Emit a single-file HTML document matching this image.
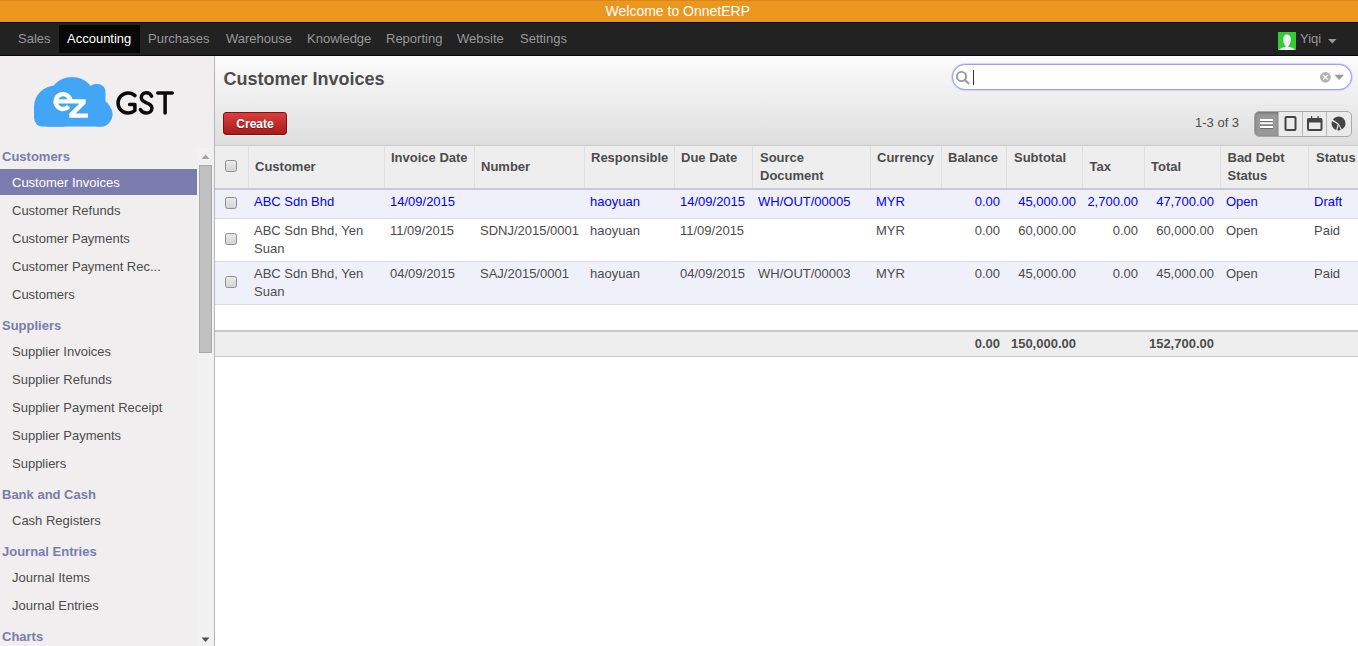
<!DOCTYPE html>
<html><head><meta charset="utf-8"><title>Customer Invoices</title>
<style>
html,body{margin:0;padding:0;width:1358px;height:646px;overflow:hidden;background:#fff;font-family:"Liberation Sans", sans-serif;}
.t{position:absolute;white-space:nowrap;line-height:18px;}
.b{position:absolute;}
</style></head><body>
<div class="b" style="left:0px;top:0px;width:1358px;height:22px;background:#ea961f;"></div>
<div class="b" style="left:0px;top:0px;width:1358px;height:1px;background:#d8871a;"></div>
<div class="t" style="left:377.79999999999995px;width:600px;text-align:center;top:1.60px;font-size:14px;color:#ffffff;">Welcome to OnnetERP</div>
<div class="b" style="left:0px;top:22px;width:1358px;height:34px;background:#222222;"></div>
<div class="b" style="left:0px;top:22px;width:1358px;height:1px;background:#080808;"></div>
<div class="b" style="left:0px;top:55px;width:1358px;height:1px;background:#080808;"></div>
<div class="b" style="left:59px;top:25px;width:81px;height:28px;background:#080808;"></div>
<div class="t" style="left:18px;top:29.50px;font-size:13px;color:#999999;">Sales</div>
<div class="t" style="left:67px;top:29.50px;font-size:13px;color:#ffffff;">Accounting</div>
<div class="t" style="left:148px;top:29.50px;font-size:13px;color:#999999;">Purchases</div>
<div class="t" style="left:226px;top:29.50px;font-size:13px;color:#999999;">Warehouse</div>
<div class="t" style="left:307px;top:29.50px;font-size:13px;color:#999999;">Knowledge</div>
<div class="t" style="left:386px;top:29.50px;font-size:13px;color:#999999;">Reporting</div>
<div class="t" style="left:457px;top:29.50px;font-size:13px;color:#999999;">Website</div>
<div class="t" style="left:520px;top:29.50px;font-size:13px;color:#999999;">Settings</div>
<svg class="b" style="left:1278px;top:32px" width="18" height="18" viewBox="0 0 18 18">
<rect width="18" height="18" fill="#33cc33"/>
<defs><linearGradient id="av" x1="0" y1="0" x2="1" y2="0"><stop offset="0" stop-color="#d8d8e0"/><stop offset="0.5" stop-color="#f4f4f8"/><stop offset="1" stop-color="#d8d8e0"/></linearGradient></defs>
<path d="M9 2.6 C11.6 2.6 12.9 4.6 12.9 7.6 C12.9 10.6 11.6 13.2 10.2 14.2 L10.3 14.8 C13.5 15.2 16.2 16 17 18 H1 C1.8 16 4.5 15.2 7.7 14.8 L7.8 14.2 C6.4 13.2 5.1 10.6 5.1 7.6 C5.1 4.6 6.4 2.6 9 2.6 Z" fill="url(#av)"/>
</svg>
<div class="t" style="left:1300px;top:29.50px;font-size:13px;color:#999999;">Yiqi</div>
<svg class="b" style="left:1328px;top:38px" width="9" height="7"><path d="M0 1 H8.5 L4.25 5.5 Z" fill="#999"/></svg>
<div class="b" style="left:0px;top:56px;width:214px;height:590px;background:#f0eeee;"></div>
<div class="b" style="left:214px;top:56px;width:1px;height:590px;background:#b4b4bc;"></div>
<svg class="b" style="left:0px;top:56px" width="214" height="92" viewBox="0 56 214 92">
<defs><clipPath id="cc"><rect x="0" y="56" width="214" height="70.8"/></clipPath></defs>
<g fill="#42a5f5" clip-path="url(#cc)">
<circle cx="55.5" cy="107" r="21.5"/>
<circle cx="72" cy="101" r="24"/>
<rect x="88" y="84" width="17.5" height="36" rx="8"/>
<circle cx="100" cy="114.3" r="12.5"/>
<rect x="34" y="100" width="76" height="26.8" rx="9"/>
</g>
<g fill="#fff">
<path d="M55.8 99.3 H85.7 V103.6 L75.6 113.6 H88 V117.7 H69.3 V113.5 L79.4 103.6 H55.8 Z"/>
</g>
<path d="M70.4 101.5 A7.4 7.4 0 1 0 68.6 106.4" fill="none" stroke="#fff" stroke-width="4.4"/>
<g fill="none" stroke="#0a0a0a" stroke-width="3.5" stroke-linecap="round" stroke-linejoin="round">
<path d="M135.0 95.6 A10.1 10.1 0 1 0 134.9 110.5 V104.6 H129.6"/>
<path d="M151.6 96.2 C150.5 94 148.5 92.85 146.3 92.85 C143.3 92.85 141.3 94.8 141.3 97.5 C141.3 100.5 143.8 101.8 146.5 102.8 C149.5 103.8 151.9 105.2 151.9 108.2 C151.9 111.2 149.5 113.05 146.4 113.05 C143.5 113.05 141.3 111.5 140.4 109.6"/>
<path d="M157.8 93.05 H172.2 M165.1 93.05 V113.05"/>
</g>
</svg>
<div class="b" style="left:197px;top:148px;width:17px;height:498px;background:#f1f1f1;"></div>
<svg class="b" style="left:201px;top:154px" width="9" height="6"><path d="M0.5 5 H8.5 L4.5 0.5 Z" fill="#a3a3a3"/></svg>
<div class="b" style="left:199px;top:165px;width:13px;height:188px;background:#c1c1c1;box-sizing:border-box;border:1px solid #a9a9a9;"></div>
<svg class="b" style="left:201px;top:637px" width="9" height="6"><path d="M0.5 0.5 H8.5 L4.5 5 Z" fill="#505050"/></svg>
<div class="b" style="left:0px;top:169px;width:197px;height:26px;background:#7c7bad;"></div>
<div class="t" style="left:2px;top:147.70px;font-size:13px;color:#7c7bad;font-weight:bold;">Customers</div>
<div class="t" style="left:12px;top:173.50px;font-size:13px;color:#ffffff;">Customer Invoices</div>
<div class="t" style="left:12px;top:201.50px;font-size:13px;color:#4c4c4c;">Customer Refunds</div>
<div class="t" style="left:12px;top:229.50px;font-size:13px;color:#4c4c4c;">Customer Payments</div>
<div class="t" style="left:12px;top:257.50px;font-size:13px;color:#4c4c4c;">Customer Payment Rec...</div>
<div class="t" style="left:12px;top:285.50px;font-size:13px;color:#4c4c4c;">Customers</div>
<div class="t" style="left:2px;top:316.60px;font-size:13px;color:#7c7bad;font-weight:bold;">Suppliers</div>
<div class="t" style="left:12px;top:342.50px;font-size:13px;color:#4c4c4c;">Supplier Invoices</div>
<div class="t" style="left:12px;top:370.50px;font-size:13px;color:#4c4c4c;">Supplier Refunds</div>
<div class="t" style="left:12px;top:398.50px;font-size:13px;color:#4c4c4c;">Supplier Payment Receipt</div>
<div class="t" style="left:12px;top:426.50px;font-size:13px;color:#4c4c4c;">Supplier Payments</div>
<div class="t" style="left:12px;top:454.50px;font-size:13px;color:#4c4c4c;">Suppliers</div>
<div class="t" style="left:2px;top:485.60px;font-size:13px;color:#7c7bad;font-weight:bold;">Bank and Cash</div>
<div class="t" style="left:12px;top:511.50px;font-size:13px;color:#4c4c4c;">Cash Registers</div>
<div class="t" style="left:2px;top:542.60px;font-size:13px;color:#7c7bad;font-weight:bold;">Journal Entries</div>
<div class="t" style="left:12px;top:568.50px;font-size:13px;color:#4c4c4c;">Journal Items</div>
<div class="t" style="left:12px;top:596.50px;font-size:13px;color:#4c4c4c;">Journal Entries</div>
<div class="t" style="left:2px;top:627.60px;font-size:13px;color:#7c7bad;font-weight:bold;">Charts</div>
<div class="b" style="left:215px;top:56px;width:1143px;height:89px;background:linear-gradient(#fcfcfc,#dedede);"></div>
<div class="b" style="left:215px;top:145px;width:1143px;height:1px;background:#cacaca;"></div>
<div class="t" style="left:223.5px;top:69.80px;font-size:18px;color:#4c4c4c;font-weight:bold;">Customer Invoices</div>
<div class="b" style="left:223px;top:112px;width:64px;height:23px;box-sizing:border-box;border:1px solid #7a1414;border-radius:3px;background:linear-gradient(#dc3e3e,#a81c1c);box-shadow:0 1px 0 rgba(255,255,255,0.6)"></div>
<div class="t" style="left:236.3px;top:115.00px;font-size:12px;color:#ffffff;font-weight:bold;text-shadow:0 1px 1px rgba(0,0,0,0.35);">Create</div>
<div class="b" style="left:952px;top:64px;width:400px;height:26px;box-sizing:border-box;border:1px solid #9c9cff;border-radius:13px;background:#fff;box-shadow:0 0 1px 0.5px #b8b8ff"></div>
<svg class="b" style="left:954px;top:68px" width="20" height="20" viewBox="954 68 20 20">
<circle cx="961.5" cy="76.5" r="4.6" fill="none" stroke="#9a9a9a" stroke-width="1.9"/>
<path d="M964.8 79.8 L968.5 83.5" stroke="#9a9a9a" stroke-width="2" stroke-linecap="round"/>
</svg>
<div class="b" style="left:973px;top:70px;width:1px;height:15px;background:#333;"></div>
<svg class="b" style="left:1318px;top:70px" width="30" height="15" viewBox="1318 70 30 15">
<circle cx="1325.4" cy="77.3" r="5.4" fill="#b3b3b3"/>
<path d="M1323 74.9 L1327.8 79.7 M1327.8 74.9 L1323 79.7" stroke="#fff" stroke-width="1.2"/>
<path d="M1334.4 74.8 H1344 L1339.2 80 Z" fill="#999"/>
</svg>
<div class="t" style="left:1195px;top:114.00px;font-size:13px;color:#4c4c4c;">1-3 of 3</div>
<div class="b" style="left:1254px;top:111px;width:98px;height:26px;box-sizing:border-box;border:1px solid #a9a9a9;border-radius:5px;background:#ebebeb;overflow:hidden"><div style="position:absolute;left:0;top:0;width:24px;height:24px;background:#999;box-shadow:inset 0 1px 3px rgba(0,0,0,0.3)"></div><div style="position:absolute;left:23px;top:0;width:1px;height:24px;background:#b8b8b8"></div><div style="position:absolute;left:47px;top:0;width:1px;height:24px;background:#b8b8b8"></div><div style="position:absolute;left:71px;top:0;width:1px;height:24px;background:#b8b8b8"></div></div>
<svg class="b" style="left:1254px;top:111px" width="98" height="26" viewBox="1254 111 98 26">
<g fill="#555" opacity="0.6"><rect x="1260" y="120" width="13" height="2"/><rect x="1260" y="123.5" width="13" height="2"/><rect x="1260" y="127" width="13" height="2"/></g><g fill="#fff"><rect x="1260" y="119" width="13" height="2"/><rect x="1260" y="122.3" width="13" height="2"/><rect x="1260" y="126" width="13" height="2"/></g>
<rect x="1285.5" y="117" width="10" height="13" rx="1" fill="none" stroke="#444" stroke-width="2"/>
<rect x="1308" y="119" width="13.5" height="11" rx="1" fill="none" stroke="#444" stroke-width="2"/>
<rect x="1307.5" y="118.5" width="14.5" height="4" fill="#444"/>
<rect x="1311" y="116" width="1.2" height="3" fill="#444"/><rect x="1317.5" y="116" width="1.2" height="3" fill="#444"/>
<path d="M1338.60 123.40 L1332.80 119.49 A7 7 0 1 1 1341.99 129.52 Z" fill="#444"/><path d="M1338.90 125.00 L1340.65 130.09 A7 7 0 0 1 1337.26 130.27 Z" fill="#444"/><path d="M1337.60 124.30 L1336.21 129.98 A7 7 0 0 1 1331.98 121.12 Z" fill="#444"/>
</svg>
<div class="b" style="left:215px;top:146px;width:1143px;height:500px;background:#ffffff;"></div>
<div class="b" style="left:215px;top:146px;width:1143px;height:42px;background:#eeeeee;"></div>
<div class="b" style="left:215px;top:188px;width:1143px;height:2px;background:#cacaca;"></div>
<div class="b" style="left:248px;top:146px;width:1px;height:42px;background:#dfdfdf;"></div>
<div class="b" style="left:384px;top:146px;width:1px;height:42px;background:#dfdfdf;"></div>
<div class="b" style="left:474px;top:146px;width:1px;height:42px;background:#dfdfdf;"></div>
<div class="b" style="left:584px;top:146px;width:1px;height:42px;background:#dfdfdf;"></div>
<div class="b" style="left:674px;top:146px;width:1px;height:42px;background:#dfdfdf;"></div>
<div class="b" style="left:752px;top:146px;width:1px;height:42px;background:#dfdfdf;"></div>
<div class="b" style="left:870px;top:146px;width:1px;height:42px;background:#dfdfdf;"></div>
<div class="b" style="left:941px;top:146px;width:1px;height:42px;background:#dfdfdf;"></div>
<div class="b" style="left:1006px;top:146px;width:1px;height:42px;background:#dfdfdf;"></div>
<div class="b" style="left:1082px;top:146px;width:1px;height:42px;background:#dfdfdf;"></div>
<div class="b" style="left:1144px;top:146px;width:1px;height:42px;background:#dfdfdf;"></div>
<div class="b" style="left:1220px;top:146px;width:1px;height:42px;background:#dfdfdf;"></div>
<div class="b" style="left:1308px;top:146px;width:1px;height:42px;background:#dfdfdf;"></div>
<div class="b" style="left:225px;top:160px;width:12px;height:12px;box-sizing:border-box;border:1px solid #8e8e8e;border-radius:2.5px;background:linear-gradient(#eaeaea,#d4d4d4)"></div>
<div class="t" style="left:255px;top:157.80px;font-size:13px;color:#4c4c4c;font-weight:bold;">Customer</div>
<div class="t" style="left:391px;top:148.80px;font-size:13px;color:#4c4c4c;font-weight:bold;">Invoice Date</div>
<div class="t" style="left:481px;top:157.80px;font-size:13px;color:#4c4c4c;font-weight:bold;">Number</div>
<div class="t" style="left:591px;top:148.80px;font-size:13px;color:#4c4c4c;font-weight:bold;">Responsible</div>
<div class="t" style="left:681px;top:148.80px;font-size:13px;color:#4c4c4c;font-weight:bold;">Due Date</div>
<div class="t" style="left:760px;top:148.80px;font-size:13px;color:#4c4c4c;font-weight:bold;">Source</div>
<div class="t" style="left:760px;top:166.80px;font-size:13px;color:#4c4c4c;font-weight:bold;">Document</div>
<div class="t" style="left:877px;top:148.80px;font-size:13px;color:#4c4c4c;font-weight:bold;">Currency</div>
<div class="t" style="left:948px;top:148.80px;font-size:13px;color:#4c4c4c;font-weight:bold;">Balance</div>
<div class="t" style="left:1014px;top:148.80px;font-size:13px;color:#4c4c4c;font-weight:bold;">Subtotal</div>
<div class="t" style="left:1089.5px;top:157.80px;font-size:13px;color:#4c4c4c;font-weight:bold;">Tax</div>
<div class="t" style="left:1151px;top:157.80px;font-size:13px;color:#4c4c4c;font-weight:bold;">Total</div>
<div class="t" style="left:1227.5px;top:148.80px;font-size:13px;color:#4c4c4c;font-weight:bold;">Bad Debt</div>
<div class="t" style="left:1227.5px;top:166.80px;font-size:13px;color:#4c4c4c;font-weight:bold;">Status</div>
<div class="t" style="left:1316px;top:148.80px;font-size:13px;color:#4c4c4c;font-weight:bold;">Status</div>
<div class="b" style="left:215px;top:190px;width:1143px;height:28px;background:#f0f0fa;"></div>
<div class="b" style="left:215px;top:219px;width:1143px;height:42px;background:#ffffff;"></div>
<div class="b" style="left:215px;top:218px;width:1143px;height:1px;background:#dddddd;"></div>
<div class="b" style="left:215px;top:262px;width:1143px;height:42px;background:#f0f0fa;"></div>
<div class="b" style="left:215px;top:261px;width:1143px;height:1px;background:#dddddd;"></div>
<div class="b" style="left:215px;top:305px;width:1143px;height:25px;background:#ffffff;"></div>
<div class="b" style="left:215px;top:304px;width:1143px;height:1px;background:#dddddd;"></div>
<div class="b" style="left:215px;top:330px;width:1143px;height:2px;background:#cacaca;"></div>
<div class="b" style="left:215px;top:332px;width:1143px;height:24px;background:#eeeeee;"></div>
<div class="b" style="left:215px;top:356px;width:1143px;height:1px;background:#cacaca;"></div>
<div class="b" style="left:225px;top:197px;width:12px;height:12px;box-sizing:border-box;border:1px solid #8e8e8e;border-radius:2.5px;background:linear-gradient(#eaeaea,#d4d4d4)"></div>
<div class="b" style="left:225px;top:233px;width:12px;height:12px;box-sizing:border-box;border:1px solid #8e8e8e;border-radius:2.5px;background:linear-gradient(#eaeaea,#d4d4d4)"></div>
<div class="b" style="left:225px;top:276px;width:12px;height:12px;box-sizing:border-box;border:1px solid #8e8e8e;border-radius:2.5px;background:linear-gradient(#eaeaea,#d4d4d4)"></div>
<div class="t" style="left:254px;top:192.50px;font-size:13px;color:#0000ff;">ABC Sdn Bhd</div>
<div class="t" style="left:390px;top:192.50px;font-size:13px;color:#0000ff;">14/09/2015</div>
<div class="t" style="left:590px;top:192.50px;font-size:13px;color:#0000ff;">haoyuan</div>
<div class="t" style="left:680px;top:192.50px;font-size:13px;color:#0000ff;">14/09/2015</div>
<div class="t" style="left:758px;top:192.50px;font-size:13px;color:#0000ff;">WH/OUT/00005</div>
<div class="t" style="left:876px;top:192.50px;font-size:13px;color:#0000ff;">MYR</div>
<div class="t" style="left:700px;width:300px;text-align:right;top:192.50px;font-size:13px;color:#0000ff;">0.00</div>
<div class="t" style="left:776px;width:300px;text-align:right;top:192.50px;font-size:13px;color:#0000ff;">45,000.00</div>
<div class="t" style="left:838px;width:300px;text-align:right;top:192.50px;font-size:13px;color:#0000ff;">2,700.00</div>
<div class="t" style="left:914px;width:300px;text-align:right;top:192.50px;font-size:13px;color:#0000ff;">47,700.00</div>
<div class="t" style="left:1226px;top:192.50px;font-size:13px;color:#0000ff;">Open</div>
<div class="t" style="left:1314px;top:192.50px;font-size:13px;color:#0000ff;">Draft</div>
<div class="t" style="left:254px;top:221.50px;font-size:13px;color:#4c4c4c;">ABC Sdn Bhd, Yen</div>
<div class="t" style="left:390px;top:221.50px;font-size:13px;color:#4c4c4c;">11/09/2015</div>
<div class="t" style="left:480px;top:221.50px;font-size:13px;color:#4c4c4c;">SDNJ/2015/0001</div>
<div class="t" style="left:590px;top:221.50px;font-size:13px;color:#4c4c4c;">haoyuan</div>
<div class="t" style="left:680px;top:221.50px;font-size:13px;color:#4c4c4c;">11/09/2015</div>
<div class="t" style="left:876px;top:221.50px;font-size:13px;color:#4c4c4c;">MYR</div>
<div class="t" style="left:700px;width:300px;text-align:right;top:221.50px;font-size:13px;color:#4c4c4c;">0.00</div>
<div class="t" style="left:776px;width:300px;text-align:right;top:221.50px;font-size:13px;color:#4c4c4c;">60,000.00</div>
<div class="t" style="left:838px;width:300px;text-align:right;top:221.50px;font-size:13px;color:#4c4c4c;">0.00</div>
<div class="t" style="left:914px;width:300px;text-align:right;top:221.50px;font-size:13px;color:#4c4c4c;">60,000.00</div>
<div class="t" style="left:1226px;top:221.50px;font-size:13px;color:#4c4c4c;">Open</div>
<div class="t" style="left:1314px;top:221.50px;font-size:13px;color:#4c4c4c;">Paid</div>
<div class="t" style="left:254px;top:239.50px;font-size:13px;color:#4c4c4c;">Suan</div>
<div class="t" style="left:254px;top:264.50px;font-size:13px;color:#4c4c4c;">ABC Sdn Bhd, Yen</div>
<div class="t" style="left:390px;top:264.50px;font-size:13px;color:#4c4c4c;">04/09/2015</div>
<div class="t" style="left:480px;top:264.50px;font-size:13px;color:#4c4c4c;">SAJ/2015/0001</div>
<div class="t" style="left:590px;top:264.50px;font-size:13px;color:#4c4c4c;">haoyuan</div>
<div class="t" style="left:680px;top:264.50px;font-size:13px;color:#4c4c4c;">04/09/2015</div>
<div class="t" style="left:758px;top:264.50px;font-size:13px;color:#4c4c4c;">WH/OUT/00003</div>
<div class="t" style="left:876px;top:264.50px;font-size:13px;color:#4c4c4c;">MYR</div>
<div class="t" style="left:700px;width:300px;text-align:right;top:264.50px;font-size:13px;color:#4c4c4c;">0.00</div>
<div class="t" style="left:776px;width:300px;text-align:right;top:264.50px;font-size:13px;color:#4c4c4c;">45,000.00</div>
<div class="t" style="left:838px;width:300px;text-align:right;top:264.50px;font-size:13px;color:#4c4c4c;">0.00</div>
<div class="t" style="left:914px;width:300px;text-align:right;top:264.50px;font-size:13px;color:#4c4c4c;">45,000.00</div>
<div class="t" style="left:1226px;top:264.50px;font-size:13px;color:#4c4c4c;">Open</div>
<div class="t" style="left:1314px;top:264.50px;font-size:13px;color:#4c4c4c;">Paid</div>
<div class="t" style="left:254px;top:282.50px;font-size:13px;color:#4c4c4c;">Suan</div>
<div class="t" style="left:700px;width:300px;text-align:right;top:334.50px;font-size:13px;color:#4c4c4c;font-weight:bold;">0.00</div>
<div class="t" style="left:776px;width:300px;text-align:right;top:334.50px;font-size:13px;color:#4c4c4c;font-weight:bold;">150,000.00</div>
<div class="t" style="left:914px;width:300px;text-align:right;top:334.50px;font-size:13px;color:#4c4c4c;font-weight:bold;">152,700.00</div>
</body></html>
